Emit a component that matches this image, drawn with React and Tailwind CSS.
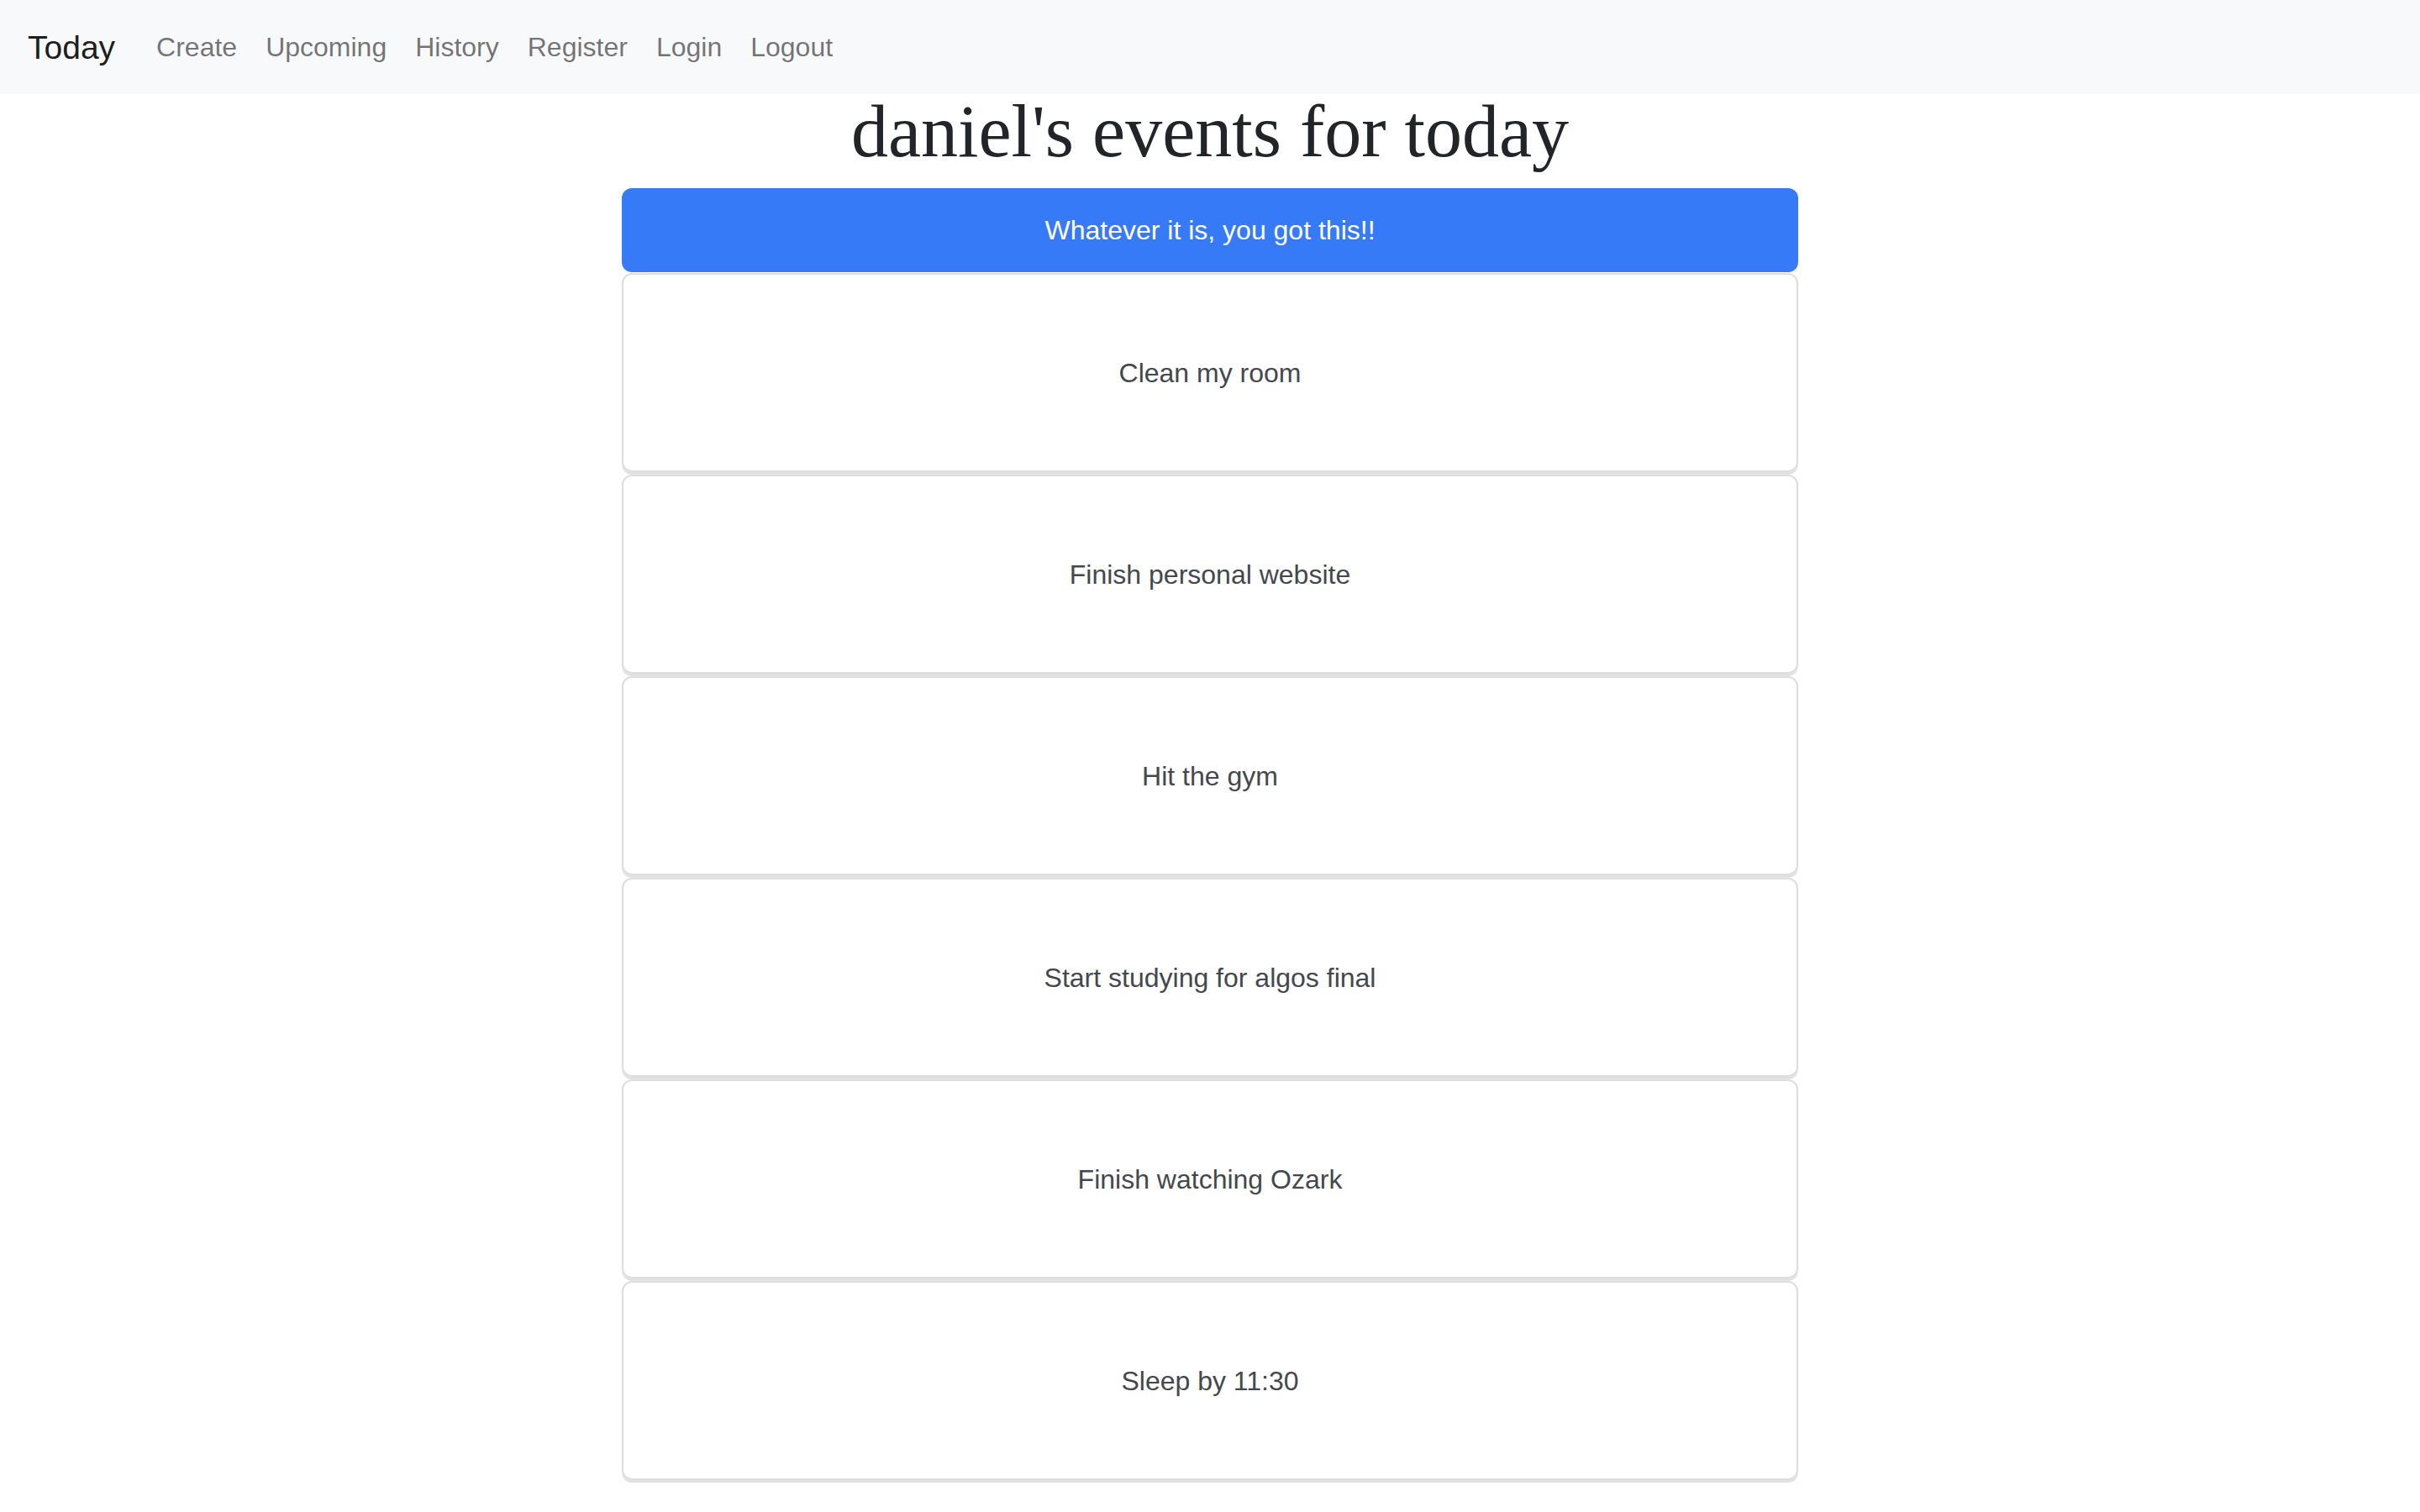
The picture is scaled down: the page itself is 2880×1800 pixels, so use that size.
const links = ["Create", "Upcoming", "History", "Register", "Login", "Logout"];

const events = [
  "Clean my room",
  "Finish personal website",
  "Hit the gym",
  "Start studying for algos final",
  "Finish watching Ozark",
  "Sleep by 11:30",
];

export default function App() {
  return (
    <div className="min-h-screen bg-white font-['Liberation_Sans',Arial,sans-serif]">
      {/* Navbar */}
      <nav className="h-[112px] bg-[#f8f9fa] flex items-center pl-[33px]">
        <a href="#" className="text-[39px] text-black/90 mr-[32px] leading-none">
          Today
        </a>
        <div className="flex items-center">
          {links.map((l) => (
            <a key={l} href="#" className="px-[17px] text-[32px] text-black/55 leading-none">
              {l}
            </a>
          ))}
        </div>
      </nav>

      <h1 className="text-center font-['Liberation_Serif','Times_New_Roman',serif] text-[88px] leading-[90px] text-[#212529] mb-[22px]">
        daniel's events for today
      </h1>

      <div className="w-[1400px] mx-auto">
        <div className="h-[100px] bg-[#377af7] rounded-[12px] flex items-center justify-center text-white text-[32px]">
          Whatever it is, you got this!!
        </div>
        <div className="pt-[1px]">
          {events.map((e) => (
            <div
              key={e}
              className="h-[237px] mb-[3px] border-2 border-[#dedede] rounded-[12px] shadow-[0_3px_1px_rgba(0,0,0,0.12)] flex items-center justify-center text-[32px] text-[#44484d]"
            >
              {e}
            </div>
          ))}
        </div>
      </div>
    </div>
  );
}
